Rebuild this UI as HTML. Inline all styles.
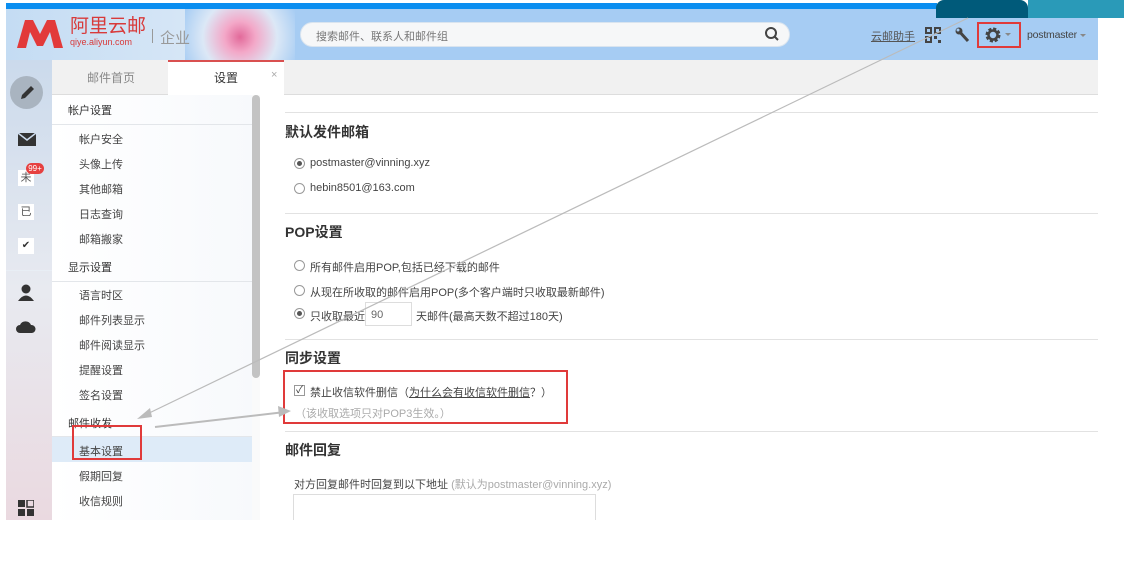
<!DOCTYPE html>
<html><head><meta charset="utf-8"><style>
*{margin:0;padding:0;box-sizing:border-box}
body{width:1124px;height:562px;background:#fff;position:relative;overflow:hidden;font-family:"Liberation Sans","Noto Sans CJK SC",sans-serif;color:#333}
.a{position:absolute}
.nav div{position:absolute;left:0;width:200px;font-size:11px;color:#444}
.rad{position:absolute;width:11px;height:11px;border:1px solid #999;border-radius:50%;background:#fff}
.rad.on::after{content:"";position:absolute;left:2px;top:2px;width:5px;height:5px;border-radius:50%;background:#555}
.t{position:absolute;font-size:11px;color:#444;white-space:nowrap}
.h{position:absolute;font-size:14px;font-weight:bold;color:#333}
.hr{position:absolute;left:285px;width:813px;height:1px;background:#e2e2e2}
</style></head><body>
<div class="a" style="left:6px;top:3px;width:931px;height:6px;background:#0a8ef0"></div>
<div class="a" style="left:936px;top:0;width:92px;height:18px;background:#005a7a;border-radius:8px 8px 0 0"></div>
<div class="a" style="left:1028px;top:0;width:96px;height:18px;background:#2a9ab8"></div>
<div class="a" style="left:6px;top:9px;width:1092px;height:51px;background:#a6ccf3"></div>
<div class="a" style="left:936px;top:9px;width:92px;height:9px;background:#005a7a"></div>
<div class="a" style="left:1028px;top:9px;width:70px;height:9px;background:#2a9ab8"></div>
<div class="a" style="left:6px;top:9px;width:180px;height:51px;background:linear-gradient(90deg,#c4dcf3,#d6e6f6)"></div>
<div class="a" style="left:185px;top:9px;width:110px;height:51px;background:radial-gradient(circle at 50% 55%,#e26a9a 0,#f3a8c8 25%,#dce8f6 60%,#a6ccf3 100%)"></div>
<svg class="a" style="left:17px;top:20px" width="46" height="28"><path d="M0 28 L8 0 L16 0 L23 14 L30 0 L38 0 L46 28 L37 28 L33 12 L26 26 L20 26 L13 12 L9 28 Z" fill="#e23a3a"/></svg>
<div class="a" style="left:70px;top:17px;font-size:19px;color:#d83a3a;line-height:20px">阿里云邮</div>
<div class="a" style="left:70px;top:37px;font-size:9px;color:#d83a3a">qiye.aliyun.com</div>
<div class="a" style="left:152px;top:29px;width:1px;height:14px;background:#999"></div>
<div class="a" style="left:160px;top:27px;font-size:15px;color:#999">企业</div>
<div class="a" style="left:300px;top:22px;width:490px;height:25px;background:#f6f7f8;border-radius:13px;border:1px solid #d9e4ef"></div>
<div class="t" style="left:316px;top:28px;color:#777;font-size:11px">搜索邮件、联系人和邮件组</div>
<svg class="a" style="left:764px;top:26px" width="16" height="16"><circle cx="7" cy="7" r="5" fill="none" stroke="#444" stroke-width="2"/><line x1="10.5" y1="10.5" x2="14" y2="14" stroke="#444" stroke-width="2"/></svg>
<div class="t" style="left:871px;top:28px;color:#555;text-decoration:underline">云邮助手</div>
<svg class="a" style="left:925px;top:27px" width="16" height="16"><g fill="#444"><rect x="0" y="0" width="7" height="7"/><rect x="9" y="0" width="7" height="7"/><rect x="0" y="9" width="7" height="7"/><rect x="9" y="9" width="3" height="3"/><rect x="13" y="13" width="3" height="3"/></g><g fill="#a6ccf3"><rect x="2" y="2" width="3" height="3"/><rect x="11" y="2" width="3" height="3"/><rect x="2" y="11" width="3" height="3"/></g></svg>
<svg class="a" style="left:955px;top:27px" width="16" height="16"><path d="M3 3 L13 14" stroke="#444" stroke-width="3"/><circle cx="4" cy="4" r="3.5" fill="#444"/><circle cx="3" cy="3" r="1.5" fill="#a6ccf3"/></svg>
<div class="a" style="left:977px;top:22px;width:44px;height:26px;border:2px solid #e03a3a"></div>
<svg class="a" style="left:985px;top:27px" width="16" height="16"><circle cx="8" cy="8" r="6" fill="none" stroke="#444" stroke-width="3" stroke-dasharray="3 1.7"/><circle cx="8" cy="8" r="4.5" fill="none" stroke="#444" stroke-width="2.5"/></svg>
<div class="a" style="left:1005px;top:33px;border:3px solid transparent;border-top-color:#888"></div>
<div class="t" style="left:1027px;top:29px;color:#444;font-size:10.5px;letter-spacing:-0.2px">postmaster</div>
<div class="a" style="left:1080px;top:34px;border:3px solid transparent;border-top-color:#888"></div>

<div class="a" style="left:6px;top:60px;width:46px;height:460px;background:linear-gradient(180deg,#cbdaec,#e8eaf0 50%,#ead9e0)"></div>
<div class="a" style="left:10px;top:76px;width:33px;height:33px;border-radius:50%;background:#a9b4c0"></div>
<svg class="a" style="left:17px;top:83px" width="20" height="20"><path d="M4 16 L5 12 L14 3 L17 6 L8 15 Z" fill="#333"/></svg>
<svg class="a" style="left:18px;top:133px" width="18" height="14"><rect width="18" height="13" fill="#333"/><path d="M0 0 L9 7 L18 0" fill="none" stroke="#cbdaec" stroke-width="1.5"/></svg>
<div class="a" style="left:18px;top:170px;width:16px;height:16px;background:#fff;font-size:11px;text-align:center;line-height:16px;color:#555">未</div>
<div class="a" style="left:26px;top:163px;width:18px;height:11px;background:#e64040;border-radius:6px;color:#fff;font-size:8px;text-align:center;line-height:11px">99+</div>
<div class="a" style="left:18px;top:204px;width:16px;height:16px;background:#fff;font-size:11px;text-align:center;line-height:16px;color:#555">已</div>
<div class="a" style="left:18px;top:238px;width:16px;height:16px;background:#fff;font-size:10px;text-align:center;line-height:16px;color:#333">✔</div>
<div class="a" style="left:6px;top:270px;width:46px;height:1px;background:#e8eef5"></div>
<svg class="a" style="left:17px;top:284px" width="18" height="18"><circle cx="9" cy="5" r="4.5" fill="#333"/><path d="M1 17 Q9 6 17 17 Z" fill="#333"/></svg>
<svg class="a" style="left:16px;top:320px" width="20" height="14"><path d="M4 13 A4 4 0 0 1 4 5 A6 6 0 0 1 15 5 A4 4 0 0 1 16 13 Z" fill="#333"/></svg>
<svg class="a" style="left:18px;top:500px" width="16" height="16"><g fill="#333"><rect width="7" height="7"/><rect x="9" width="7" height="7" fill="none" stroke="#333" stroke-width="1.5"/><rect y="9" width="7" height="7"/><rect x="9" y="9" width="7" height="7"/></g></svg>

<div class="a" style="left:52px;top:60px;width:1046px;height:35px;background:#f1f1f1;border-bottom:1px solid #ddd"></div>
<div class="t" style="left:87px;top:69px;font-size:12px;color:#888">邮件首页</div>
<div class="a" style="left:168px;top:60px;width:116px;height:36px;background:#fff;border-top:2px solid #d95050"></div>
<div class="t" style="left:214px;top:69px;font-size:12px;color:#333">设置</div>
<div class="t" style="left:271px;top:69px;color:#aaa">×</div>

<div class="a nav" style="left:52px;top:95px;width:200px;height:425px;background:linear-gradient(90deg,#fff,#f7f9fc)">
<div style="top:7px;left:16px;color:#333">帐户设置</div>
<div style="top:29px;height:1px;background:#e3e6ea"></div>
<div style="top:36px;left:27px">帐户安全</div>
<div style="top:61px;left:27px">头像上传</div>
<div style="top:86px;left:27px">其他邮箱</div>
<div style="top:111px;left:27px">日志查询</div>
<div style="top:136px;left:27px">邮箱搬家</div>
<div style="top:164px;left:16px;color:#333">显示设置</div>
<div style="top:186px;height:1px;background:#e3e6ea"></div>
<div style="top:192px;left:27px">语言时区</div>
<div style="top:217px;left:27px">邮件列表显示</div>
<div style="top:242px;left:27px">邮件阅读显示</div>
<div style="top:267px;left:27px">提醒设置</div>
<div style="top:292px;left:27px">签名设置</div>
<div style="top:320px;left:16px;color:#333">邮件收发</div>
<div style="top:341px;height:1px;background:#e3e6ea"></div>
<div style="top:342px;height:25px;background:#deebf8"></div>
<div style="top:348px;left:27px;width:auto">基本设置</div>
<div style="top:373px;left:27px">假期回复</div>
<div style="top:398px;left:27px">收信规则</div>
</div>
<div class="a" style="left:252px;top:95px;width:8px;height:425px;background:#fafafa"></div>
<div class="a" style="left:252px;top:95px;width:8px;height:283px;background:#c3c3c3;border-radius:4px"></div>
<div class="a" style="left:72px;top:425px;width:70px;height:35px;border:2px solid #e03a3a"></div>

<div class="hr" style="top:112px"></div>
<div class="h" style="top:122px;left:285px">默认发件邮箱</div>
<div class="rad on" style="left:294px;top:158px"></div><div class="t" style="left:310px;top:157px">postmaster@vinning.xyz</div>
<div class="rad" style="left:294px;top:183px"></div><div class="t" style="left:310px;top:182px">hebin8501@163.com</div>
<div class="hr" style="top:213px"></div>
<div class="h" style="top:222px;left:285px">POP设置</div>
<div class="rad" style="left:294px;top:260px"></div><div class="t" style="left:310px;top:259px">所有邮件启用POP,包括已经下载的邮件</div>
<div class="rad" style="left:294px;top:285px"></div><div class="t" style="left:310px;top:284px">从现在所收取的邮件启用POP(多个客户端时只收取最新邮件)</div>
<div class="rad on" style="left:294px;top:308px"></div><div class="t" style="left:310px;top:308px">只收取最近</div>
<div class="a" style="left:365px;top:302px;width:47px;height:24px;border:1px solid #ddd;font-size:11px;color:#666;padding:6px 0 0 5px">90</div>
<div class="t" style="left:416px;top:308px">天邮件(最高天数不超过180天)</div>
<div class="hr" style="top:339px"></div>
<div class="h" style="top:348px;left:285px">同步设置</div>
<div class="a" style="left:294px;top:385px;width:11px;height:11px;border:1px solid #999;font-size:10px;line-height:9px;text-align:center">✓</div>
<div class="t" style="left:310px;top:384px">禁止收信软件删信（<span style="text-decoration:underline">为什么会有收信软件删信</span>？）</div>
<div class="t" style="left:295px;top:405px;color:#aaa">（该收取选项只对POP3生效。）</div>
<div class="a" style="left:283px;top:370px;width:285px;height:54px;border:2px solid #e03a3a"></div>
<div class="hr" style="top:431px"></div>
<div class="h" style="top:440px;left:285px">邮件回复</div>
<div class="t" style="left:294px;top:476px">对方回复邮件时回复到以下地址 <span style="color:#aaa">(默认为postmaster@vinning.xyz)</span></div>
<div class="a" style="left:293px;top:494px;width:303px;height:26px;border:1px solid #ddd;border-bottom:none"></div>

<svg class="a" style="left:0;top:0" width="1124" height="562">
<line x1="968" y1="18" x2="143" y2="416" stroke="#bbb" stroke-width="1.2"/>
<path d="M137 419 L150 408 L152 417 Z" fill="#bbb"/>
<line x1="155" y1="427" x2="285" y2="412" stroke="#bbb" stroke-width="2"/>
<path d="M291 411 L278 406 L279 417 Z" fill="#bbb"/>
</svg>
</body></html>
